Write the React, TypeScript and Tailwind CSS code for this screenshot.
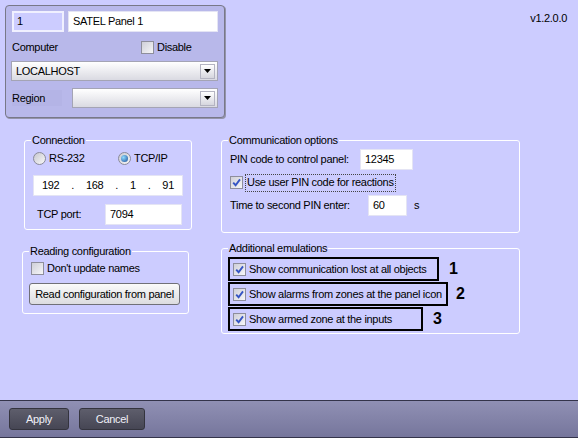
import React from "react";

const font = { fontFamily: '"Liberation Sans", Arial, sans-serif' };

function Check({ checked }: { checked?: boolean }) {
	return (
		<span className="inline-flex h-[13px] w-[13px] shrink-0 items-center justify-center border border-[#8e8e9c] bg-gradient-to-br from-[#cfcfd8] to-[#f6f6f8]">
			{checked && (
				<svg viewBox="0 0 9 9" className="h-[9px] w-[9px]">
					<path d="M1.2 4.6 L3.6 7.2 L8 1.4" stroke="#3554c4" strokeWidth="1.9" fill="none" />
				</svg>
			)}
		</span>
	);
}

function Radio({ checked }: { checked?: boolean }) {
	return (
		<span className="inline-flex h-[13px] w-[13px] shrink-0 items-center justify-center rounded-full border border-[#8a8a9a] bg-gradient-to-br from-[#c8c8d0] to-[#f8f8f8]">
			{checked && <span className="h-[7px] w-[7px] rounded-full bg-[radial-gradient(circle_at_35%_35%,#8fdcff,#1b4c98)]" />}
		</span>
	);
}

function Combo({ value, w }: { value?: string; w: string }) {
	return (
		<div className={`flex h-[20px] items-center border border-[#a4a4b4] bg-gradient-to-b from-white to-[#dadae2] pl-[4px] pr-[2px] ${w}`}>
			<span className="flex-1">{value}</span>
			<span className="flex h-[15px] w-[15px] items-center justify-center border border-[#b4b4c2] bg-gradient-to-b from-white to-[#d6d6de]">
				<svg width="7" height="4">
					<path d="M0 0h7L3.5 4z" fill="#000" />
				</svg>
			</span>
		</div>
	);
}

function Field({ value, w, className = "" }: { value: string; w: string; className?: string }) {
	return (
		<div className={`flex h-[21px] items-center border border-[#e4e4f4] bg-white px-[4px] ${w} ${className}`}>{value}</div>
	);
}

function Group({ title, className, pad, children }: { title: string; className: string; pad: string; children: React.ReactNode }) {
	return (
		<fieldset className={`rounded-[3px] border border-white p-0 ${className}`}>
			<legend className="ml-[6px] px-[1px] leading-[13px]">{title}</legend>
			<div className={pad}>{children}</div>
		</fieldset>
	);
}

function Marked({ text, w, n, gap }: { text: string; w: string; n: string; gap: string }) {
	return (
		<div className="flex items-center">
			<div className={`flex h-[24px] items-center border-2 border-black pl-[3px] ${w}`}>
				<Check checked />
				<span className="ml-[3px]">{text}</span>
			</div>
			<span className={`text-[16px] font-bold leading-none tracking-normal ${gap}`}>{n}</span>
		</div>
	);
}

export default function App() {
	return (
		<div
			className="flex h-[438px] w-[578px] flex-col whitespace-nowrap bg-[#ccccff] text-[11px] leading-[13px] tracking-[-0.3px] text-black"
			style={font}
		>
			<div className="flex-1">
				<div className="flex justify-between">
					<div className="ml-[5px] mt-[5px] h-[113px] w-[220px] rounded-[4px] border border-[#787888] bg-[#b8b8ea] px-[5px] pt-[5px] shadow-[1px_1px_0_#9494aa]">
						<div className="flex">
							<div className="ml-[1px] flex h-[21px] w-[52px] items-center border-2 border-[#f0f0ff] bg-[#ccccff] px-[3px]">1</div>
							<Field value="SATEL Panel 1" w="w-[150px]" className="ml-[4px]" />
						</div>
						<div className="mt-[9px] flex items-center">
							<span className="ml-[1px] w-[129px]">Computer</span>
							<Check />
							<span className="ml-[3px]">Disable</span>
						</div>
						<div className="mt-[7px]">
							<Combo value="LOCALHOST" w="w-[207px]" />
						</div>
						<div className="mt-[7px] flex items-center gap-[10px]">
							<span className="ml-[1px] flex h-[16px] w-[50px] items-center bg-[#b4b4e6]">Region</span>
							<Combo w="w-[146px]" />
						</div>
					</div>
					<div className="mr-[11px] mt-[12px]">v1.2.0.0</div>
				</div>

				<div className="mt-[16px] flex">
					<div className="ml-[22px] flex w-[169px] flex-col">
						<Group title="Connection" className="ml-[2px] h-[96px] w-[167px]" pad="px-[8px]">
							<div className="mt-[5px] flex items-center">
								<Radio />
								<span className="ml-[3px] w-[69px]">RS-232</span>
								<Radio checked />
								<span className="ml-[3px]">TCP/IP</span>
							</div>
							<div className="mt-[10px] flex h-[21px] w-[150px] items-center justify-around border border-[#e4e4f4] bg-white px-[2px]">
								<span>192</span>
								<span>.</span>
								<span>168</span>
								<span>.</span>
								<span>1</span>
								<span>.</span>
								<span>91</span>
							</div>
							<div className="mt-[8px] flex items-center">
								<span className="ml-[4px] w-[68px]">TCP port:</span>
								<Field value="7094" w="w-[77px]" />
							</div>
						</Group>
						<Group title="Reading configuration" className="mt-[15px] h-[69px] w-[167px]" pad="px-[6px]">
							<div className="mt-[4px] flex items-center pl-[2px]">
								<Check />
								<span className="ml-[3px]">Don't update names</span>
							</div>
							<button className="mt-[8px] h-[22px] w-[151px] rounded-[3px] border border-[#707078] bg-gradient-to-b from-[#fafafa] to-[#dcdce0] text-[11px]">
								Read configuration from panel
							</button>
						</Group>
					</div>

					<div className="ml-[30px] flex w-[299px] flex-col">
						<Group title="Communication options" className="h-[99px] w-[299px]" pad="px-[8px]">
							<div className="mt-[2px] flex items-center">
								<span className="w-[130px]">PIN code to control panel:</span>
								<Field value="12345" w="w-[53px]" />
							</div>
							<div className="mt-[3px] flex h-[19px] items-center">
								<Check checked />
								<span className="ml-[2px] flex h-[18px] items-center border border-dotted border-[#444] pl-[1px] pr-[1px]">
									Use user PIN code for reactions
								</span>
							</div>
							<div className="mt-[3px] flex items-center">
								<span className="w-[138px]">Time to second PIN enter:</span>
								<Field value="60" w="w-[39px]" />
								<span className="ml-[7px]">s</span>
							</div>
						</Group>
						<Group title="Additional emulations" className="mt-[9px] h-[92px] w-[299px]" pad="px-[6px]">
							<div className="mt-[2px] flex flex-col gap-[1px]">
								<Marked text="Show communication lost at all objects" w="w-[211px]" n="1" gap="ml-[10px]" />
								<Marked text="Show alarms from zones at the panel icon" w="w-[220px]" n="2" gap="ml-[8px]" />
								<Marked text="Show armed zone at the inputs" w="w-[195px]" n="3" gap="ml-[10px]" />
							</div>
						</Group>
					</div>
				</div>
			</div>

			<div className="flex h-[38px] items-center gap-[10px] border-y border-[#34344a] bg-gradient-to-b from-[#9090b4] to-[#76769c] pl-[9px]">
				<button className="h-[22px] w-[60px] rounded-[3px] border border-[#34343e] bg-gradient-to-b from-[#5e5e6c] to-[#464654] text-[11px] text-[#f0f0f8]">
					Apply
				</button>
				<button className="h-[22px] w-[66px] rounded-[3px] border border-[#34343e] bg-gradient-to-b from-[#5e5e6c] to-[#464654] text-[11px] text-[#f0f0f8]">
					Cancel
				</button>
			</div>
		</div>
	);
}
